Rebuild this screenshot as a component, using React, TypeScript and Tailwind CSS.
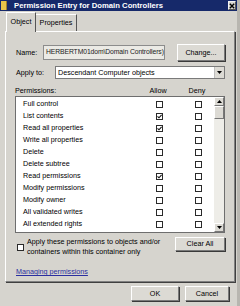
import React from "react";

type Perm = { name: string; allow: boolean; deny: boolean };

const perms: Perm[] = [
  { name: "Full control", allow: false, deny: false },
  { name: "List contents", allow: true, deny: false },
  { name: "Read all properties", allow: true, deny: false },
  { name: "Write all properties", allow: false, deny: false },
  { name: "Delete", allow: false, deny: false },
  { name: "Delete subtree", allow: false, deny: false },
  { name: "Read permissions", allow: true, deny: false },
  { name: "Modify permissions", allow: false, deny: false },
  { name: "Modify owner", allow: false, deny: false },
  { name: "All validated writes", allow: false, deny: false },
  { name: "All extended rights", allow: false, deny: false },
  { name: "Create all child objects", allow: false, deny: false },
];

const Box = ({ checked }: { checked?: boolean }) => (
  <div className="w-[7px] h-[7px] border border-[#2a2a2a] bg-white flex items-center justify-center">
    {checked && (
      <svg width="5" height="5" viewBox="0 0 5 5">
        <path d="M0.5 2.3 L2 3.8 L4.6 0.8" stroke="#111" strokeWidth="1.1" fill="none" />
      </svg>
    )}
  </div>
);

const Btn = ({ label, className }: { label: string; className: string }) => (
  <div
    className={`flex items-center justify-center whitespace-nowrap bg-[#dcdad4] border-t border-l border-white border-r border-b border-r-[#7a7a7a] border-b-[#7a7a7a] shadow-[1px_1px_0_#3a3a3a] ${className}`}
  >
    {label}
  </div>
);

export default function App() {
  return (
    <div className="w-[240px] h-[306px] overflow-hidden bg-[#d6d4ce] text-black text-[7.2px] leading-none font-[Liberation_Sans,Arial,sans-serif] flex flex-col border-r-[3px] border-[#b8b6b0]">
      {/* title bar */}
      <div className="h-[11px] shrink-0 bg-[#16296a] flex items-center pl-[1px] pr-[1px]">
        <div className="w-[6px] h-[9px] bg-[#e8c44a] border-r border-[#a0802a]" />
        <span className="ml-[7px] text-white font-bold text-[7.7px] whitespace-nowrap">Permission Entry for Domain Controllers</span>
        <div className="ml-auto w-[8px] h-[9px] bg-[#d8d6d0] border border-[#f4f4f4] border-r-[#555] border-b-[#555] flex items-center justify-center">
          <svg width="6" height="6" viewBox="0 0 6 6">
            <path d="M0.8 0.8 L5.2 5.2 M5.2 0.8 L0.8 5.2" stroke="#000" strokeWidth="1.4" />
          </svg>
        </div>
      </div>

      <div className="pl-[5px] pr-[2px] flex flex-col">
        {/* tabs */}
        <div className="mt-[1px] h-[19px] flex items-end pl-[1px]">
          <div className="relative z-10 h-[20px] -mb-[1px] w-[30px] bg-[#d6d4ce] border-t border-l border-white border-r border-r-[#555] flex items-center justify-center pb-[2px]">
            Object
          </div>
          <div className="h-[17px] w-[41px] border-t border-white border-r border-r-[#555] flex items-center justify-center">
            Properties
          </div>
        </div>

        {/* panel */}
        <div className="h-[251px] border-t border-l border-white border-r border-b border-r-[#808080] border-b-[#808080] shadow-[1px_1px_0_#404040] pl-[10px] pr-[9px] flex flex-col">
          <div className="mt-[12px] h-[17px] flex items-center">
            <span className="w-[27px]">Name:</span>
            <div className="w-[122px] h-[15px] bg-[#ebeae5] border border-[#8c8c8c] flex items-center pl-[2px] text-[#222] text-[6.8px] tracking-[-0.1px] whitespace-nowrap overflow-hidden">
              HERBERTM01dom\Domain Controllers)
            </div>
            <Btn label="Change..." className="ml-auto w-[48px] h-[17px]" />
          </div>

          <div className="mt-[5px] h-[13px] flex items-center">
            <span className="w-[39px]">Apply to:</span>
            <div className="ml-auto w-[170px] h-[13px] bg-white border border-[#7a7a7a] flex items-center pl-[2px]">
              <span className="flex-1">Descendant Computer objects</span>
              <div className="w-[10px] h-[11px] bg-[#dcdad4] border-l border-[#bdbdbd] flex items-center justify-center">
                <svg width="5" height="3" viewBox="0 0 5 3">
                  <path d="M0 0 H5 L2.5 3 Z" fill="#000" />
                </svg>
              </div>
            </div>
          </div>

          <div className="mt-[7px] h-[9px] flex items-center -ml-[1px]">
            <span className="flex-1">Permissions:</span>
            <span className="w-[30px] text-center">Allow</span>
            <span className="w-[9px]" />
            <span className="w-[30px] text-center">Deny</span>
            <span className="w-[13px]" />
          </div>

          <div className="mt-[1px] -ml-[1px] h-[137px] bg-white border border-[#6e6e6e] flex overflow-hidden">
            <div className="flex-1 pt-[1px] flex flex-col overflow-hidden">
              {perms.map((p) => (
                <div key={p.name} className="h-[12px] shrink-0 flex items-center">
                  <span className="flex-1 pl-[7px] whitespace-nowrap">{p.name}</span>
                  <div className="w-[30px] flex justify-center">
                    <Box checked={p.allow} />
                  </div>
                  <span className="w-[9px]" />
                  <div className="w-[30px] flex justify-center">
                    <Box checked={p.deny} />
                  </div>
                  <span className="w-[1px]" />
                </div>
              ))}
            </div>
            <div className="w-[10px] bg-[#eeede8] flex flex-col">
              <div className="h-[9px] bg-[#dcdad4] border-t border-l border-white border-r border-b border-r-[#777] border-b-[#777] flex items-center justify-center">
                <svg width="5" height="3" viewBox="0 0 5 3">
                  <path d="M0 3 H5 L2.5 0 Z" fill="#000" />
                </svg>
              </div>
              <div className="h-[13px] bg-[#dcdad4] border-t border-l border-white border-r border-b border-r-[#777] border-b-[#777]" />
              <div className="flex-1" />
              <div className="h-[9px] bg-[#dcdad4] border-t border-l border-white border-r border-b border-r-[#777] border-b-[#777] flex items-center justify-center">
                <svg width="5" height="3" viewBox="0 0 5 3">
                  <path d="M0 0 H5 L2.5 3 Z" fill="#000" />
                </svg>
              </div>
            </div>
          </div>

          <div className="mt-[4px] flex items-start">
            <div className="ml-[1px] mt-[7px]">
              <Box />
            </div>
            <div className="ml-[3px] leading-[10px] whitespace-nowrap">
              <div>Apply these permissions to objects and/or</div>
              <div>containers within this container only</div>
            </div>
            <Btn label="Clear All" className="ml-auto w-[50px] h-[14px]" />
          </div>

          <a className="mt-[11px] text-[#2b2fa0] underline self-start">Managing permissions</a>
        </div>

        {/* dialog buttons */}
        <div className="mt-[4px] flex justify-end gap-[6px] pr-[6px]">
          <Btn label="OK" className="w-[48px] h-[15px] border-[#222] shadow-[1px_1px_0_#000]" />
          <Btn label="Cancel" className="w-[44px] h-[15px]" />
        </div>
      </div>
    </div>
  );
}
